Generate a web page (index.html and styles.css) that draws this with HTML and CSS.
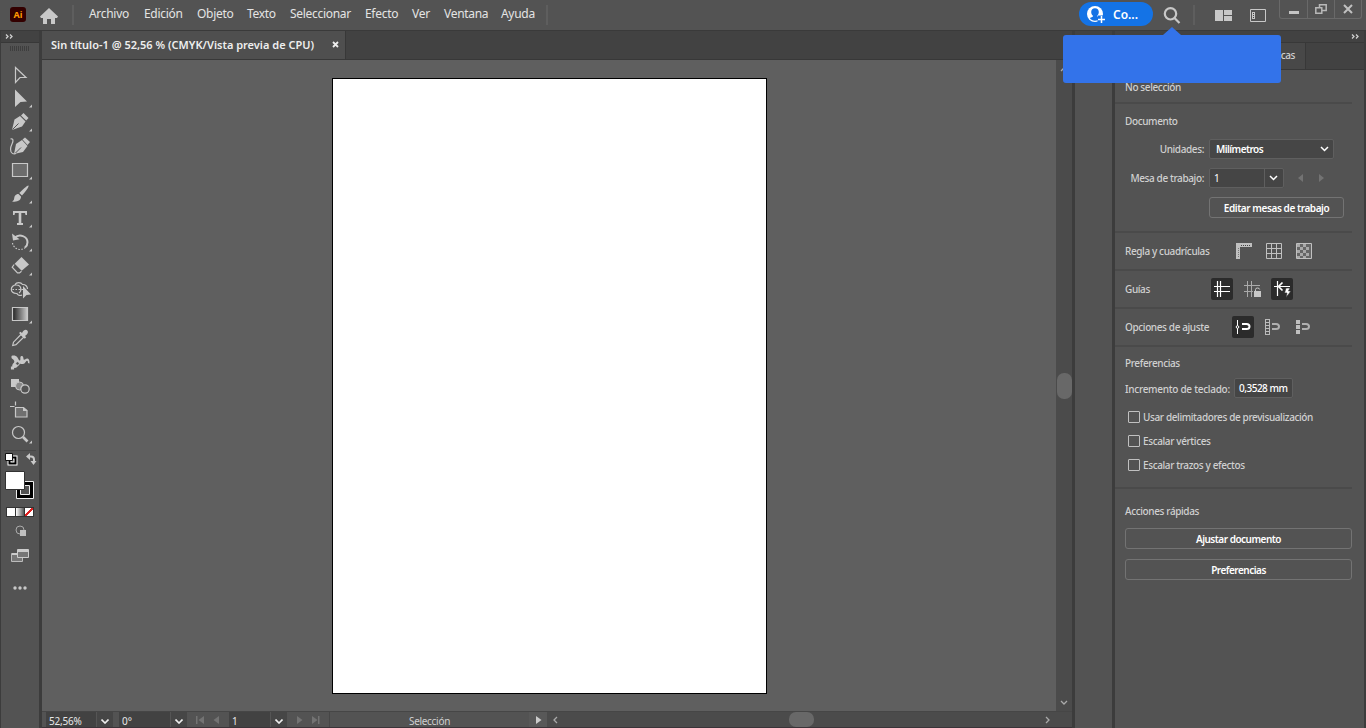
FILE: index.html
```
<!DOCTYPE html>
<html lang="es">
<head>
    <meta charset="UTF-8">
    <meta name="viewport" content="width=device-width, initial-scale=1.0">
    <title>Sin título-1</title>
    <link rel="stylesheet" href="styles.css">
</head>
<body>
    <header class="menubar">
        <div class="app-logo">Ai</div>
        <svg class="home" width="18" height="16" viewBox="0 0 18 16"><path d="M9 0L0 8.5l1 1.5h2v6h4v-5h4v5h4v-6h2l1-1.5z"/></svg>
        <span class="menu-sep"></span>
        <nav class="menu">
            <span>Archivo</span>
            <span>Edición</span>
            <span>Objeto</span>
            <span>Texto</span>
            <span>Seleccionar</span>
            <span>Efecto</span>
            <span>Ver</span>
            <span>Ventana</span>
            <span>Ayuda</span>
        </nav>
        <span class="menu-sep"></span>
        <div class="share">
            <svg width="19" height="18" viewBox="0 0 19 18">
                <circle cx="8" cy="8" r="8" fill="#fff"/>
                <path d="M8 2.2c2.4 0 3.8 1.6 3.8 3.8 0 1.7-.8 2.8-1.6 3.6v1.1l3 1.4c-1.2 1.8-3 2.7-5.2 2.7s-4-.9-5.2-2.7l3-1.4V9.600C5 8.800 4.200 7.700 4.200 6c0-2.200 1.400-3.800 3.800-3.800z" fill="#1473e6"/>
                <path d="M10.500 9.500h8v8h-8z" fill="#1473e6"/>
                <path d="M14.500 10v7M11 13.500h7" stroke="#fff" stroke-width="1.500"/>
            </svg>
            <span>Co...</span>
        </div>
        <svg class="search" width="18" height="18" viewBox="0 0 18 18"><circle cx="7.500" cy="6.800" r="5.700"/><path d="M11.500 11l5 5"/></svg>
        <span class="menu-sep"></span>
        <svg class="layout-icon" width="17" height="11" viewBox="0 0 17 11"><path d="M0 0h8v11H0zM9 0h8v5H9zM9 6h8v5H9z"/></svg>
        <svg class="panel-icon" width="16" height="13" viewBox="0 0 16 13"><path d="M.5.5h15v12H.5z" fill="none" stroke="#c8c8c8"/><path d="M2 3h3v7H2z" fill="#c8c8c8"/><path d="M3 4h1v1H3zM3 6h1v1H3zM3 8h1v1H3z" fill="#444"/></svg>
        <div class="window-buttons">
            <div><svg width="10" height="12" viewBox="0 0 10 12"><path d="M0 8h10v3H0z" fill="#c4c4c4"/></svg></div>
            <div><svg width="12" height="10" viewBox="0 0 12 10" fill="none" stroke="#b8b8b8" stroke-width="1.500"><path d="M.8 3.800h6v5.500h-6z"/><path d="M4.500 3.500V.8h6.700v5.700H7"/></svg></div>
            <div><svg width="10" height="10" viewBox="0 0 10 10" stroke="#c0c0c0" stroke-width="2"><path d="M1 1l8 8M9 1L1 9"/></svg></div>
        </div>
        <div class="tooltip"></div>
    </header>

    <div class="workspace">
        <aside class="toolbar">
            <div class="toolbar-head"><svg width="9" height="5" viewBox="0 0 9 5"><path d="M1 .5l2 2-2 2M5 .5l2 2-2 2"/></svg></div>
            <div class="grip"></div>
            <div class="tools">
                <svg viewBox="0 0 40 24"><path class="line" d="M15.500 5.500l10.500 10h-6l-4.500 5z"/></svg>
                <svg viewBox="0 0 40 24"><path d="M15 3.500l12 12-6.500.5-5.500 5z"/><path d="M32 18.500v3h-3z"/></svg>
                <svg viewBox="0 0 40 24"><path d="M12 20l2.500-10.500L20 6l5.500 5.500-3.500 5z"/><path d="M21 5.500l2.500-2.500 5 5-2.300 2.500z"/><path class="cut" d="M12.500 19.500l6-6"/><path d="M32 18.500v3h-3z"/></svg>
                <svg viewBox="0 0 40 24"><path d="M14 20l2-10 6-4 5.500 6-4.500 6z"/><path d="M22.500 5.500L25 3.500l5 4.500-2.500 3z"/><path class="cut" d="M15 19.500l6-6"/><path class="line" d="M10.500 5c3-1 3 2 1.500 5s-2.500 8 .5 9.500c1 .4 2 .5 3.500 0"/></svg>
                <svg viewBox="0 0 40 24"><path class="line rect" d="M12.500 5.500h15v13h-15z"/><path d="M32 18.500v3h-3z"/></svg>
                <svg viewBox="0 0 40 24"><path d="M28.500 3.500c.8 1-3 6.500-6.500 10l-2.700-2.400C22 8 27.500 3 28.500 3.500zM18.500 12l2.500 2.500c.3 3.500-3.500 6-9 5 3-1.500 1.500-3.500 3-5.800.9-1.200 2-1.700 3.500-1.700z"/><path d="M32 18.500v3h-3z"/></svg>
                <svg viewBox="0 0 40 24"><path d="M13 5h14v4h-1.500l-.5-2h-3.700v10H23v2h-6v-2h1.700V7H15l-.5 2H13z"/><path d="M32 18.500v3h-3z"/></svg>
                <svg viewBox="0 0 40 24"><path class="line thick" d="M14.500 8c5-5 13-1.500 13 4.200 0 2.500-1 4-2.500 5.300"/><path d="M12 3.500l1 7 6.500-1.300z"/><path class="line dots" d="M12.500 13c.5 3.500 4 6.500 7.500 6.500 2 0 3.500-.6 5-1.700"/><path d="M32 18.500v3h-3z"/></svg>
                <svg viewBox="0 0 40 24"><path d="M21.500 3l7.500 7.500-7.300 6.300-7-7z"/><path class="line" d="M14.200 10.500l-2 2.700 5.300 5.700h2l2-1.700"/><path d="M32 18.500v3h-3z"/></svg>
                <svg viewBox="0 0 40 24"><path class="line" d="M15 6.500c1.500-2.500 6-2.500 7.500 0 3-.2 5 2 5 4.500M22 17c-3 1.500-5-1-5-1.500-8 .5-7-9-.5-8.500 5 0 5.500 6 2.500 8"/><path class="line dots" d="M12.500 11.500H23"/><path d="M23 8l8 8.500-4.500.4-3.500 3.600z"/></svg>
                <svg viewBox="0 0 40 24"><defs><linearGradient id="g1"><stop offset="0" stop-color="#222"/><stop offset="1" stop-color="#ccc"/></linearGradient></defs><path d="M12.500 5.500h15v13h-15z" fill="url(#g1)" stroke="#c8c8c8" stroke-width="1.200"/><path d="M32 18.500v3h-3z"/></svg>
                <svg viewBox="0 0 40 24"><path class="line" d="M21 8.500l-7.500 7.700-.8 3.300 3.300-.8 7.700-7.500z"/><path d="M19 7l1.500-1.300 1.500 1.200c1.700-3.400 4-3.900 5.300-2.500 1.400 1.400.7 3.700-2.300 5.600l1.200 1.300-1.400 1.500z"/></svg>
                <svg viewBox="0 0 40 24"><path d="M11.500 6c2-1 4.500-.5 6 1.500 1 1.500 1.500 3.500 2.500 3 1-.7-.5-4 1.500-4.500 2.500-.6 1.500 3.800 2.700 3.800 1 0 1.300-1.300 3-1.300 1.500 0 2.500 1.500 2.300 5l-1.500-.5c0-1.500-.3-2.300-1-2.300-1.300 0-1.500 3-4 3.300-2 .3-3-1-4 .5s-2 3.500-4.500 3.500c-2 0-3-1.500-2-3.500.8-1.600 2.500-2 1.500-4-.6-1.100-1.500-1.500-2.500-2.500z"/><path class="line" d="M12 18.500l4-4M11.500 17h2v2h-2z"/><circle class="hole" cx="17.500" cy="13.500" r="1.800"/></svg>
                <svg viewBox="0 0 40 24"><path d="M11 5h8v8h-8z"/><circle cx="19.500" cy="12" r="4" fill="#888" stroke="#c8c8c8"/><circle cx="25" cy="15" r="4.200" fill="#535353" stroke="#c8c8c8" stroke-width="1.200"/></svg>
                <svg viewBox="0 0 40 24"><path d="M10 8.500h4.500M15.500 3.500v4M15.500 9.500h8l3.500 3v6.500H15.500z" fill="#707070" stroke="#c8c8c8" stroke-width="1.200"/><path d="M23 9l4.500 4H23z"/></svg>
                <svg viewBox="0 0 40 24"><circle class="line" cx="18.500" cy="10.500" r="6" stroke-width="1.600"/><path class="line heavy" d="M23 15l4.500 4.500"/><path d="M32 18.500v3h-3z"/></svg>
            </div>
            <svg class="swatches" width="40" height="58" viewBox="0 0 40 58">
                <path d="M4 1.500h32" stroke="#474747"/>
                <path d="M9.500 8.500h6v6h-6z" fill="none" stroke="#fff" stroke-width="4"/><path d="M9.500 8.500h6v6h-6z" fill="none" stroke="#000" stroke-width="2"/>
                <path d="M5.500 4.500h7v7h-7z" fill="#fff" stroke="#111"/>
                <path d="M28 7.500h3q3 0 3 3v3" fill="none" stroke="#c8c8c8" stroke-width="2"/><path d="M26 7.500l4-3.500v7zM30.500 12h6L33.500 16z" fill="#c8c8c8"/>
                <path d="M16.500 32.500h17v17h-17z" fill="#000" stroke="#eee"/><path d="M20.500 36.500h9v9h-9z" fill="#535353" stroke="#eee"/>
                <path d="M5.500 22.500h19v18h-19z" fill="#fff" stroke="#333"/>
            </svg>
            <div class="color-modes"><i></i><i class="grad"></i><i class="none"></i></div>
            <svg class="draw-mode" width="12" height="12" viewBox="0 0 12 12"><circle cx="5" cy="5" r="4" fill="none" stroke="#aaa"/><path d="M5 5h6v6H5z" fill="#c0c0c0"/></svg>
            <svg class="screen-mode" width="18" height="14" viewBox="0 0 18 14"><path d="M.5 4.500h11v8H.5z" fill="#777" stroke="#bbb"/><path d="M6.500.5h11v8h-11z" fill="#777" stroke="#ccc"/><path d="M6 1h11v2H6zM1 4h5v2H1z" fill="#ccc"/></svg>
            <svg class="more" width="14" height="4" viewBox="0 0 14 4"><circle cx="2" cy="2" r="1.700"/><circle cx="7" cy="2" r="1.700"/><circle cx="12" cy="2" r="1.700"/></svg>
        </aside>

        <main class="document">
            <div class="tabs">
                <div class="tab"><span>Sin título-1 @ 52,56 % (CMYK/Vista previa de CPU)</span><svg width="7" height="7" viewBox="0 0 7 7"><path d="M1 1l5 5M6 1L1 6"/></svg></div>
            </div>
            <div class="canvas-row">
                <div class="canvas"><div class="artboard"></div></div>
                <div class="vscroll">
                    <svg width="8" height="5" viewBox="0 0 8 5"><path d="M1 4l3-3 3 3"/></svg>
                    <span></span>
                    <svg width="8" height="5" viewBox="0 0 8 5"><path d="M1 1l3 3 3-3"/></svg>
                </div>
            </div>
            <footer class="status">
                <div class="field zoom-level">52,56%</div>
                <div class="drop"><svg width="8" height="5" viewBox="0 0 8 5"><path d="M.5.500l3.500 3.500 3.500-3.500"/></svg></div>
                <div class="field angle">0°</div>
                <div class="drop"><svg width="8" height="5" viewBox="0 0 8 5"><path d="M.5.500l3.500 3.500 3.500-3.500"/></svg></div>
                <svg class="nav-icons" width="42" height="16" viewBox="0 0 42 16"><path d="M9 4h1.500v8H9zM17 4v8l-5.500-4zM32 4v8l-5.500-4z"/></svg>
                <div class="field page">1</div>
                <div class="drop"><svg width="8" height="5" viewBox="0 0 8 5"><path d="M.5.500l3.500 3.500 3.500-3.500"/></svg></div>
                <svg class="nav-icons" width="42" height="16" viewBox="0 0 42 16"><path d="M10 4v8l5.500-4zM25 4v8l5.500-4zM31 4h1.500v8H31z"/></svg>
                <div class="status-text">Selección</div>
                <div class="status-play"><svg width="6" height="8" viewBox="0 0 6 8"><path d="M0 0l5.500 4L0 8z"/></svg></div>
                <div class="hscroll">
                    <svg width="5" height="8" viewBox="0 0 5 8"><path d="M4 1L1 4l3 3"/></svg>
                    <span></span>
                    <svg width="5" height="8" viewBox="0 0 5 8"><path d="M1 1l3 3-3 3"/></svg>
                </div>
            </footer>
        </main>

        <div class="dock"><div class="dock-head"></div><div class="dock-body"></div></div>

        <aside class="panel">
            <div class="panel-head"><svg width="9" height="5" viewBox="0 0 9 5"><path d="M1 .5l2 2-2 2M5 .5l2 2-2 2"/></svg></div>
            <div class="panel-tabs"><span class="panel-tab">Propiedades</span><span class="panel-tab last">Bibliotecas</span></div>
            <div class="props">
                <section class="selection">No selección</section>
                <section class="doc">
                    <h2>Documento</h2>
                    <div class="row units"><label>Unidades:</label><div class="select">Milímetros<svg width="9" height="6" viewBox="0 0 9 6"><path d="M1 1l3.500 3.500L8 1"/></svg></div></div>
                    <div class="row boards"><label>Mesa de trabajo:</label><div class="combo"><b>1</b><span><svg width="9" height="6" viewBox="0 0 9 6"><path d="M1 1l3.500 3.500L8 1"/></svg></span></div><svg class="steps" width="28" height="8" viewBox="0 0 28 8"><path d="M5 0v8L0 4zM21 0v8l5-4z"/></svg></div>
                    <button class="edit-boards">Editar mesas de trabajo</button>
                </section>
                <section class="icon-row rulers">
                    <span>Regla y cuadrículas</span>
                    <i><svg width="18" height="18" viewBox="0 0 18 18"><path d="M1 1h16v4H5v12H1z" fill="#c0c0c0"/><path d="M6 3.500h10" stroke="#444" stroke-dasharray="1 1"/><path d="M3.500 6v10" stroke="#777" stroke-dasharray="1 1"/></svg></i>
                    <i><svg width="18" height="18" viewBox="0 0 18 18" fill="none" stroke="#c0c0c0"><path d="M1.500 1.500h15v15h-15zM6.500 1v16M11.500 1v16M1 6.500h16M1 11.500h16"/></svg></i>
                    <i><svg width="18" height="18" viewBox="0 0 18 18"><path d="M1.500 1.500h15v15h-15z" fill="#666" stroke="#c0c0c0"/><path d="M3.500 2v14M9.500 2v14" stroke="#a8a8a8" stroke-width="3" stroke-dasharray="3"/><path d="M6.500 5v11M12.500 5v11" stroke="#a8a8a8" stroke-width="3" stroke-dasharray="3"/></svg></i>
                </section>
                <section class="icon-row guides">
                    <span>Guías</span>
                    <i class="on"><svg width="18" height="18" viewBox="0 0 18 18" stroke="#fff" stroke-width="1.200"><path d="M1 6.500h16M1 11.500h16M4.500 1v16M7.500 1v16"/></svg></i>
                    <i><svg width="18" height="18" viewBox="0 0 18 18"><path d="M1 5.500h16M1 11.500h9M4.500 1v16M8.500 1v16" stroke="#aaa"/><path d="M11 11h7v6h-7z" fill="#c8c8c8"/><path d="M12.500 11V9.500q0-1.500 2-1.500 2 0 2.200 1.500" fill="none" stroke="#c8c8c8"/></svg></i>
                    <i class="on"><svg width="18" height="18" viewBox="0 0 18 18"><path d="M1 6.500h16M4.500 1v15" stroke="#fff" stroke-width="1.200"/><path d="M9.500 2.500L5.500 6.500l4 4" stroke="#fff" stroke-width="1.700" fill="none"/><path d="M13 8h4l-1.500 3H18l-5 6.500 1-4.500h-2.500z" fill="#fff" stroke="#2b2b2b" stroke-width=".6"/></svg></i>
                </section>
                <section class="icon-row snaps">
                    <span>Opciones de ajuste</span>
                    <i class="on"><svg width="18" height="18" viewBox="0 0 18 18"><path d="M3.500 2v14" stroke="#fff"/><circle cx="3.500" cy="9" r="1.300" fill="#292929" stroke="#fff"/><path d="M8 6h4.500q3 0 3 2.500t-3 2.500H8" fill="none" stroke="#fff" stroke-width="2"/></svg></i>
                    <i><svg width="18" height="18" viewBox="0 0 18 18"><path d="M1.500 1v16M5.500 1v16M1 1.500h5M1 4.500h5M1 7.500h5M1 10.500h5M1 13.500h5M1 16.500h5" stroke="#bbb"/><path d="M8 6h4q3 0 3 2.500t-3 2.500H8" fill="none" stroke="#b0b0b0" stroke-width="2"/></svg></i>
                    <i><svg width="18" height="18" viewBox="0 0 18 18"><path d="M2 2h4v4H2zM2 7h4v4H2zM2 12h4v4H2z" fill="#c0c0c0"/><path d="M8 6h4q3 0 3 2.500t-3 2.500H8" fill="none" stroke="#b0b0b0" stroke-width="2"/></svg></i>
                </section>
                <section class="prefs">
                    <h2>Preferencias</h2>
                    <div class="increment"><label>Incremento de teclado:</label><div class="mm">0,3528 mm</div></div>
                    <label class="check"><i></i>Usar delimitadores de previsualización</label>
                    <label class="check"><i></i>Escalar vértices</label>
                    <label class="check"><i></i>Escalar trazos y efectos</label>
                </section>
                <section class="actions">
                    <h2>Acciones rápidas</h2>
                    <button>Ajustar documento</button>
                    <button>Preferencias</button>
                </section>
            </div>
        </aside>
    </div>
</body>
</html>
```

FILE: styles.css
```
* {
    box-sizing: border-box;
}
body {
    margin: 0;
    width: 1366px;
    height: 728px;
    overflow: hidden;
    display: flex;
    flex-direction: column;
    background: #535353;
    color: #d0d0d0;
    font-family: "Noto Sans", "Open Sans", sans-serif;
    font-size: 10px;
}
svg {
    display: block;
    flex: none;
}

/* Menu bar */
.menubar {
    position: relative;
    height: 31px;
    flex: none;
    display: flex;
    align-items: flex-start;
    background: #535353;
    border-bottom: 1px solid #3a3a3a;
}
.app-logo {
    margin: 7px 0 0 10px;
    width: 16px;
    height: 15px;
    border-radius: 3px;
    background: #330000;
    color: #ff9a00;
    font-size: 9px;
    font-weight: 700;
    line-height: 15px;
    text-align: center;
}
.home {
    margin: 8px 0 0 14px;
    fill: #c8c8c8;
}
.menu-sep {
    width: 2px;
    height: 20px;
    margin: 5px 0 0 14px;
    background: #5e5e5e;
}
.menu {
    margin-left: 15px;
    display: grid;
    grid-template-columns: 55px 53px 50px 43px 75px 47px 32px 57px 45px;
    font-size: 12px;
    line-height: 28px;
    letter-spacing: -0.3px;
    color: #e4e4e4;
    white-space: nowrap;
}
.menu + .menu-sep {
    margin-left: 0;
}
.share {
    margin: 2px 0 0 531px;
    width: 74px;
    height: 24px;
    padding: 1px 0 0 8px;
    border-radius: 12px;
    background: #1473e6;
    display: flex;
    align-items: center;
    gap: 7px;
    font-size: 12px;
    font-weight: 600;
    color: #fff;
}
.search {
    margin: 7px 0 0 10px;
    fill: none;
    stroke: #c8c8c8;
    stroke-width: 2.2;
}
.search + .menu-sep {
    margin-left: 12px;
}
.layout-icon {
    margin: 10px 0 0 20px;
    fill: #c8c8c8;
}
.panel-icon {
    margin: 9px 0 0 18px;
}
.window-buttons {
    display: flex;
    margin-left: 13px;
    height: 19px;
    border: 1px solid #696969;
    border-top: 0;
    border-radius: 0 0 3px 3px;
}
.window-buttons div {
    width: 27px;
    display: flex;
    align-items: center;
    justify-content: center;
    border-left: 1px solid #696969;
}
.window-buttons div:first-child {
    border-left: 0;
}
.tooltip {
    position: absolute;
    left: 1063px;
    top: 35px;
    width: 218px;
    height: 48px;
    border-radius: 3px;
    background: #3373ea;
    z-index: 5;
}
.tooltip::before {
    content: "";
    position: absolute;
    left: 100px;
    top: -8px;
    border: 9px solid transparent;
    border-top: 0;
    border-bottom: 8px solid #3373ea;
}

.workspace {
    flex: 1;
    min-height: 0;
    display: grid;
    grid-template-columns: 42px 1030px 43px 251px;
}

/* Tools */
.toolbar {
    border-left: 1px solid #3c3c3c;
    border-right: 3px solid #3c3c3c;
    background: #535353;
}
.toolbar-head, .panel-head {
    height: 12px;
    background: #424242;
    border-bottom: 1px solid #383838;
}
.toolbar-head {
    padding: 3px 0 0 4px;
}
.toolbar-head svg, .panel-head svg {
    fill: none;
    stroke: #d0d0d0;
    stroke-width: 1.3;
}
.grip {
    height: 5px;
    width: 20px;
    margin: 3px 0 11px 9px;
    background: repeating-linear-gradient(90deg, #3e3e3e 0 1px, #535353 1px 2px);
}
.tools {
    margin-left: -1px;
    display: flex;
    flex-direction: column;
}
.tools svg {
    width: 40px;
    height: 24px;
    fill: #c8c8c8;
}
.tools .line {
    fill: none;
    stroke: #c8c8c8;
    stroke-width: 1.2;
}
.tools .rect {
    fill: #6c6c6c;
}
.tools .thick {
    stroke-width: 2;
}
.tools .heavy {
    stroke-width: 2.6;
}
.tools .dots {
    stroke-dasharray: 1.5 1.5;
}
.tools .cut {
    fill: none;
    stroke: #535353;
    stroke-width: 1;
}
.tools .hole {
    fill: #535353;
    stroke: #c8c8c8;
}
.swatches {
    margin: 3px 0 0 -1px;
}
.color-modes {
    display: flex;
    width: 28px;
    height: 10px;
    margin: 0 0 0 5px;
    border: 1px solid #333;
    background: #fff;
}
.color-modes i {
    flex: 1;
    border-right: 1px solid #333;
}
.color-modes .grad {
    background: linear-gradient(90deg, #fff, #555);
}
.color-modes .none {
    border: 0;
    background: linear-gradient(135deg, #fff 40%, #e02020 40% 60%, #fff 60%);
}
.draw-mode {
    margin: 8px 0 0 14px;
}
.screen-mode {
    margin: 12px 0 0 10px;
}
.more {
    margin: 23px 0 0 12px;
    fill: #c8c8c8;
}

/* Document window */
.document {
    display: flex;
    flex-direction: column;
    min-width: 0;
    min-height: 0;
}
.tabs {
    height: 29px;
    flex: none;
    background: #424242;
    border-bottom: 1px solid #383838;
}
.tab {
    width: 304px;
    height: 28px;
    padding: 0 0 1px 9px;
    display: flex;
    align-items: center;
    background: #4f4f4f;
    border-right: 1px solid #383838;
    color: #eee;
    font-size: 11px;
    font-weight: 600;
    white-space: nowrap;
}
.tab span {
    width: 281px;
}
.tab svg {
    fill: none;
    stroke: #eee;
    stroke-width: 1.8;
}
.canvas-row {
    flex: 1;
    display: flex;
    min-height: 0;
}
.canvas {
    flex: 1;
    background: #5f5f5f;
    padding: 18px 0 0 290px;
}
.artboard {
    width: 435px;
    height: 616px;
    background: #fff;
    border: 1px solid #000;
}
.vscroll {
    width: 16px;
    background: #4b4b4b;
    display: flex;
    flex-direction: column;
    align-items: center;
    justify-content: space-between;
    padding: 7px 0 6px;
}
.vscroll svg, .hscroll svg {
    fill: none;
    stroke: #aaa;
    stroke-width: 1.3;
}
.vscroll span {
    width: 15px;
    height: 26px;
    border-radius: 7px;
    background: #686868;
}
.status {
    height: 17px;
    flex: none;
    display: flex;
    background: #535353;
    border-top: 1px solid #464646;
    border-bottom: 1px solid #3a3338;
    padding-left: 4px;
    line-height: 18px;
}
.field {
    background: #424242;
    padding-left: 3px;
    color: #e8e8e8;
    overflow: hidden;
}
.zoom-level {
    width: 50px;
    letter-spacing: -0.2px;
}
.angle {
    width: 51px;
    margin-left: 6px;
}
.page {
    width: 41px;
}
.drop {
    width: 17px;
    background: #464646;
    border-left: 1px solid #555;
    display: flex;
    align-items: center;
    justify-content: center;
    padding: 3px 1px 0 0;
}
.drop svg {
    fill: none;
    stroke: #eee;
    stroke-width: 1.6;
}
.nav-icons {
    fill: #737373;
}
.status-text {
    width: 200px;
    text-align: center;
    border-left: 1px solid #464646;
    letter-spacing: -0.3px;
}
.status-play {
    width: 18px;
    padding: 4px 0 0 7px;
    background: #585858;
    fill: #ccc;
}
.hscroll {
    flex: 1;
    background: #4b4b4b;
    display: flex;
    align-items: center;
    justify-content: space-between;
    padding: 0 22px 0 6px;
}
.hscroll span {
    width: 25px;
    height: 15px;
    border-radius: 7px;
    background: #686868;
}

/* Collapsed dock */
.dock {
    border-left: 3px solid #3c3c3c;
    border-right: 3px solid #3c3c3c;
    display: flex;
    flex-direction: column;
}
.dock-head {
    height: 12px;
    background: #424242;
}
.dock-body {
    flex: 1;
    background: #535353;
}

/* Properties panel */
.panel {
    border-right: 2px solid #3c3c3c;
    display: flex;
    flex-direction: column;
    font-weight: 500;
    letter-spacing: -0.38px;
}
.panel-head {
    display: flex;
    justify-content: flex-end;
    align-items: center;
    padding-right: 4px;
}
.panel-tabs {
    height: 27px;
    display: flex;
    background: #424242;
    border-bottom: 1px solid #383838;
    line-height: 25px;
}
.panel-tab {
    width: 90px;
    padding-left: 10px;
    background: #535353;
}
.panel-tab.last {
    width: 101px;
    padding: 0 10px 0 0;
    text-align: right;
    background: #484848;
    border-right: 1px solid #383838;
}
.props {
    width: 237px;
    display: grid;
    grid-template-rows: 34px 129px 38px 38px 38px 142px 100px;
}
.props section {
    border-bottom: 2px solid #4a4a4a;
    padding-left: 10px;
}
.props h2 {
    margin: 0;
    font-size: 10px;
    font-weight: 500;
}
.props .actions {
    border: 0;
}
.selection {
    line-height: 34px;
}
.props .doc h2 {
    margin-top: -1px;
    line-height: 36px;
}
.row {
    display: flex;
    align-items: center;
    height: 20px;
}
.row label {
    width: 79px;
    margin-right: 5px;
    text-align: right;
    white-space: nowrap;
}
.boards {
    margin-top: 9px;
}
.select {
    width: 125px;
    height: 20px;
    padding: 0 4px 0 6px;
    display: flex;
    align-items: center;
    justify-content: space-between;
    border: 1px solid #5f5f5f;
    border-radius: 2px;
    background: #464646;
    color: #fff;
    font-weight: 600;
    letter-spacing: -0.55px;
}
.select svg, .combo svg {
    fill: none;
    stroke: #fff;
    stroke-width: 1.5;
}
.combo {
    width: 75px;
    height: 20px;
    display: flex;
    border: 1px solid #5f5f5f;
    border-radius: 2px;
    background: #454545;
    color: #fff;
    line-height: 18px;
}
.combo b {
    flex: 1;
    padding-left: 4px;
    font-weight: 400;
}
.combo span {
    width: 19px;
    border-left: 1px solid #5f5f5f;
    display: flex;
    align-items: center;
    justify-content: center;
    padding-right: 1px;
}
.steps {
    margin-left: 14px;
    fill: #737373;
}
button {
    display: block;
    height: 21px;
    padding: 0;
    border: 1px solid #737373;
    border-radius: 3px;
    background: #535353;
    color: #fff;
    font: 600 10px "Noto Sans", "Open Sans", sans-serif;
    letter-spacing: -0.5px;
}
.edit-boards {
    width: 135px;
    margin: 9px 0 0 84px;
    letter-spacing: -0.42px;
}
.icon-row {
    display: flex;
    align-items: center;
    padding-bottom: 1px;
}
.icon-row span {
    white-space: nowrap;
}
.icon-row i {
    width: 22px;
    height: 22px;
    margin-right: 8px;
    border-radius: 2px;
    display: flex;
    align-items: center;
    justify-content: center;
}
.icon-row i.on {
    background: #2b2b2b;
}
.rulers span {
    width: 108px;
}
.guides span {
    width: 86px;
}
.snaps span {
    width: 107px;
}
.prefs h2 {
    padding-top: 6px;
    line-height: 20px;
}
.increment {
    display: flex;
    align-items: center;
    height: 22px;
    margin: 5px 0 5px;
}
.increment label {
    width: 109px;
    letter-spacing: -0.28px;
    white-space: nowrap;
}
.mm {
    width: 59px;
    height: 20px;
    margin-top: -2px;
    padding-left: 4px;
    border: 1px solid #5f5f5f;
    border-radius: 2px;
    background: #454545;
    color: #fff;
    line-height: 18px;
    letter-spacing: -0.5px;
    white-space: nowrap;
}
.check {
    height: 24px;
    padding-left: 3px;
    display: flex;
    align-items: center;
    gap: 3px;
    white-space: nowrap;
}
.check i {
    width: 12px;
    height: 12px;
    border: 1px solid #c0c0c0;
    border-radius: 1px;
}
.actions h2 {
    padding-top: 12px;
    line-height: 20px;
}
.actions button {
    width: 227px;
    margin: 7px 0 10px;
}
```
